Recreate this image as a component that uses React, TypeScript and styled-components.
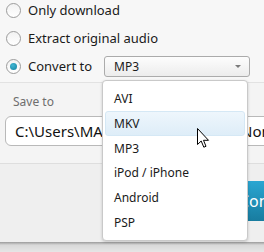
import React from 'react'
import styled, { createGlobalStyle } from 'styled-components'

const GlobalStyle = createGlobalStyle`
  html, body {
    margin: 0;
    padding: 0;
    background: #f0f0f0;
  }
  body {
    font-family: 'Noto Sans', 'Open Sans', sans-serif;
  }
`

const Window = styled.div`
  position: relative;
  width: 264px;
  height: 252px;
  overflow: hidden;
  background: #f0f0f0;
  display: flex;
  flex-direction: column;
`

const OptionsPanel = styled.div`
  display: flex;
  flex-direction: column;
  margin-top: -4px;
  padding: 0 0 2px 6px;
  background: #f7f7f7;
  border-bottom: 1px solid #e2e2e2;
`

const OptionRow = styled.div`
  display: flex;
  align-items: center;
  height: 28px;
  gap: 7px;
`

const Radio = styled.span<{ checked?: boolean }>`
  position: relative;
  width: 13px;
  height: 13px;
  border-radius: 50%;
  border: 1px solid #9c9c9c;
  background: linear-gradient(#f2f2f2, #ffffff);
  flex-shrink: 0;

  &::after {
    content: '';
    display: ${({ checked }) => (checked ? 'block' : 'none')};
    position: absolute;
    left: 3px;
    top: 3px;
    width: 7px;
    height: 7px;
    border-radius: 50%;
    background: radial-gradient(circle at 40% 35%, #3fb6d3, #14809f);
  }
`

const OptionLabel = styled.span`
  font-size: 13px;
  color: #1a1a1a;
  white-space: nowrap;
`

const Combo = styled.div`
  display: flex;
  align-items: center;
  justify-content: space-between;
  height: 21px;
  margin-left: 5px;
  padding: 0 8px 0 9px;
  box-sizing: border-box;
  width: 146px;
  border: 1px solid #ababab;
  border-radius: 3px;
  background: linear-gradient(#fdfdfd, #ececec);
  font-size: 12px;
  color: #1a1a1a;
`

const Arrow = styled.span`
  width: 0;
  height: 0;
  border-left: 3px solid transparent;
  border-right: 3px solid transparent;
  border-top: 3px solid #7a7a7a;
`

const SaveSection = styled.div`
  display: flex;
  flex-direction: column;
  padding: 8px 0 0 5px;
  height: 72px;
  background: #f4f4f4;
  border-bottom: 1px solid #dedede;
`

const SaveLabel = styled.div`
  font-size: 12px;
  color: #6e6e6e;
  padding-left: 8px;
  height: 22px;
  line-height: 22px;
`

const FieldRow = styled.div`
  display: flex;
  gap: 4px;
  margin-top: 3px;
`

const Field = styled.div<{ width: number }>`
  width: ${({ width }) => width}px;
  flex-shrink: 0;
  height: 30px;
  box-sizing: border-box;
  border: 1px solid #b9b9b9;
  border-radius: 6px;
  background: #fff;
  padding-left: 9px;
  display: flex;
  align-items: center;
  font-size: 15px;
  color: #111;
  white-space: nowrap;
  overflow: hidden;
`

const ActionArea = styled.div`
  flex: 1;
  display: flex;
  justify-content: flex-end;
  align-items: flex-start;
  padding-top: 17px;
  background: #efefef;
`

const ConvertButton = styled.div`
  width: 60px;
  margin-right: -32px;
  height: 40px;
  box-sizing: border-box;
  padding-left: 3px;
  display: flex;
  align-items: center;
  border-radius: 3px;
  background: linear-gradient(#2aa6d2, #187c9f);
  color: #fff;
  font-size: 16px;
  white-space: nowrap;
`

const Footer = styled.div`
  height: 10px;
  background: linear-gradient(#9a9a9a, #d8d8d8 3px, #e6e6e6);
`

const Popup = styled.div`
  position: absolute;
  left: 102px;
  top: 80px;
  width: 146px;
  height: 161px;
  box-sizing: border-box;
  padding: 5px 2px;
  background: #fff;
  border: 1px solid #c9c9c9;
  border-radius: 4px;
  box-shadow: 0 1px 3px rgba(0, 0, 0, 0.18);
  display: flex;
  flex-direction: column;
`

const Item = styled.div<{ hover?: boolean }>`
  height: 25px;
  box-sizing: border-box;
  display: flex;
  align-items: center;
  padding-left: 8px;
  font-size: 12px;
  color: #1a1a1a;
  border-radius: 3px;
  border: 1px solid ${({ hover }) => (hover ? '#d5e8f5' : 'transparent')};
  background: ${({ hover }) => (hover ? 'linear-gradient(#eef6fc, #deedf8)' : 'transparent')};
`

const Cursor = styled.svg`
  position: absolute;
  left: 197px;
  top: 128px;
`

const formats = ['AVI', 'MKV', 'MP3', 'iPod / iPhone', 'Android', 'PSP']

export default function App() {
  return (
    <Window>
      <GlobalStyle />
      <OptionsPanel>
        <OptionRow>
          <Radio />
          <OptionLabel>Only download</OptionLabel>
        </OptionRow>
        <OptionRow>
          <Radio />
          <OptionLabel>Extract original audio</OptionLabel>
        </OptionRow>
        <OptionRow>
          <Radio checked />
          <OptionLabel>Convert to</OptionLabel>
          <Combo>
            MP3
            <Arrow />
          </Combo>
        </OptionRow>
      </OptionsPanel>
      <SaveSection>
        <SaveLabel>Save to</SaveLabel>
        <FieldRow>
          <Field width={222}>C:\Users\MANUEL\Videos</Field>
          <Field width={80}>None</Field>
        </FieldRow>
      </SaveSection>
      <ActionArea>
        <ConvertButton>Convert</ConvertButton>
      </ActionArea>
      <Footer />
      <Popup>
        {formats.map((f) => (
          <Item key={f} hover={f === 'MKV'}>
            {f}
          </Item>
        ))}
      </Popup>
      <Cursor width="13" height="21" viewBox="0 0 13 21">
        <path
          d="M0.5 0.5 L0.5 16.5 L4.2 13 L6.8 19.2 L9 18.3 L6.5 12.3 L11.5 12.3 Z"
          fill="#fff"
          stroke="#000"
          strokeWidth="1"
          strokeLinejoin="round"
        />
      </Cursor>
    </Window>
  )
}
